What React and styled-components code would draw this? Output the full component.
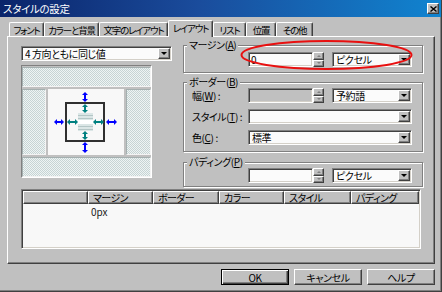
import React from "react";
import styled, { createGlobalStyle, css } from "styled-components";

const Global = createGlobalStyle`
  html, body { margin: 0; padding: 0; background: #c0c0c0; }
  body {
    font-family: "Noto Sans CJK JP", "Noto Sans", sans-serif;
    font-size: 10px;
    color: #000;
    font-feature-settings: "palt";
  }
  * { box-sizing: border-box; }
`;

const raised = css`
  background: #c0c0c0;
  border: 1px solid;
  border-color: #fff #404040 #404040 #fff;
  box-shadow: inset -1px -1px #808080;
`;

const sunken = css`
  border: 1px solid;
  border-color: #808080 #fff #fff #808080;
  box-shadow: inset 1px 1px #404040, inset -1px -1px #d4d0c8;
`;

const hatch = css`
  background-color: #dfe8e8;
  background-image: repeating-conic-gradient(#c6d4d4 0 25%, #eef4f4 0 50%);
  background-size: 2px 2px;
`;

const Window = styled.div`
  position: relative;
  width: 442px;
  height: 292px;
  background: #c0c0c0;
  display: flex;
  flex-direction: column;
  border-right: 1px solid #404040;
  border-bottom: 1px solid #404040;
  box-shadow: inset -1px -1px #808080;
  overflow: hidden;
`;

const TitleBar = styled.div`
  flex: none;
  height: 17px;
  display: flex;
  align-items: center;
  justify-content: space-between;
  padding: 0 2px 0 3px;
  background: linear-gradient(90deg, #0a246a 0%, #1a4c9c 45%, #1084d0 100%);
  color: #fff;
  font-size: 10.5px;
  letter-spacing: -0.3px;
`;

const CloseButton = styled.div`
  width: 12px;
  height: 11px;
  ${raised};
  display: flex;
  align-items: center;
  justify-content: center;
`;

const Body = styled.div`
  flex: 1;
  display: flex;
  flex-direction: column;
  padding: 3px 6px 0 7px;
`;

const TabStrip = styled.div`
  position: relative;
  z-index: 1;
  height: 16px;
  display: flex;
  align-items: flex-end;
  padding-left: 2px;
`;

const Tab = styled.div`
  width: ${(p) => p.$w}px;
  height: ${(p) => (p.$active ? 17 : 14)}px;
  margin-bottom: ${(p) => (p.$active ? -1 : 0)}px;
  display: flex;
  align-items: center;
  justify-content: center;
  background: #c0c0c0;
  border-top: 1px solid #fff;
  border-left: 1px solid #fff;
  border-right: 1px solid #404040;
  box-shadow: inset -1px 0 #808080;
  border-radius: 2px 2px 0 0;
  white-space: nowrap;
  overflow: hidden;
  font-size: 9.5px;
  letter-spacing: -1.2px;
  padding-bottom: ${(p) => (p.$active ? 2 : 0)}px;
`;

const Panel = styled.div`
  width: 428px;
  height: 228px;
  border: 1px solid;
  border-color: #fff #404040 #404040 #fff;
  box-shadow: inset -1px -1px #808080;
  padding: 9px 0 0 13px;
  display: flex;
  flex-direction: column;
`;

const TopSection = styled.div`
  height: 141px;
  display: flex;
  align-items: flex-start;
  gap: 11px;
`;

const LeftCol = styled.div`
  width: 151px;
  display: flex;
  flex-direction: column;
  gap: 4px;
`;

const RightCol = styled.div`
  width: 240px;
  margin-top: -1px;
  display: flex;
  flex-direction: column;
`;

const SelectBox = styled.div`
  width: ${(p) => p.$w}px;
  height: 15px;
  ${sunken};
  background: #fbfbfb;
  display: flex;
  align-items: center;
  padding: 0 1px 0 3px;
  white-space: nowrap;
`;

const SelectText = styled.span`
  flex: 1;
  overflow: hidden;
  letter-spacing: -0.4px;
`;

const DropButton = styled.div`
  width: 12px;
  height: 11px;
  ${raised};
  display: flex;
  align-items: center;
  justify-content: center;
  &::after {
    content: "";
    border-left: 3px solid transparent;
    border-right: 3px solid transparent;
    border-top: 3px solid #000;
  }
`;

const TextBox = styled.div`
  width: 65px;
  height: 15px;
  ${sunken};
  background: ${(p) => (p.$disabled ? "#c0c0c0" : "#fbfbfb")};
  display: flex;
  align-items: center;
  padding-left: 2px;
`;

const Spinner = styled.div`
  width: 11px;
  height: 15px;
  display: flex;
  flex-direction: column;
`;

const SpinButton = styled.div`
  flex: 1;
  ${raised};
  display: flex;
  align-items: center;
  justify-content: center;
  &::after {
    content: "";
    border-left: 2px solid transparent;
    border-right: 2px solid transparent;
    ${(p) =>
      p.$up
        ? "border-bottom: 2px solid #808080;"
        : "border-top: 2px solid #808080;"}
  }
`;

const Group = styled.div`
  position: relative;
  height: ${(p) => p.$h}px;
  margin-top: ${(p) => p.$mt || 0}px;
  border: 1px solid #808080;
  box-shadow: inset 1px 1px #fff, 1px 1px #fff;
  padding-top: ${(p) => p.$pt}px;
  display: flex;
  flex-direction: column;
  gap: 6px;
`;

const Legend = styled.span`
  position: absolute;
  top: -7px;
  left: 3px;
  padding: 0 2px;
  background: #c0c0c0;
  line-height: 12px;
  white-space: nowrap;
  letter-spacing: -0.4px;
`;

const FieldRow = styled.div`
  height: 15px;
  display: flex;
  align-items: center;
  padding-left: 8px;
`;

const FieldLabel = styled.span`
  width: 56px;
  white-space: nowrap;
  letter-spacing: -0.4px;
`;

const Gap = styled.div`
  width: 8px;
`;

const Diagram = styled.div`
  width: 131px;
  height: 113px;
  border: 1px solid;
  border-color: #808080 #fff #fff #808080;
  background: #c0c0c0;
  display: grid;
  grid-template-columns: 24px 76px 25px;
  grid-template-rows: 20px 66px 20px;
  gap: 2px;
  padding-top: 1px;
`;

const HatchArea = styled.div`
  ${hatch};
  grid-column: ${(p) => (p.$wide ? "1 / -1" : "auto")};
  border: 1px solid;
  border-color: #a4b0b0 #f4f4f4 #f4f4f4 #a4b0b0;
`;

const CenterArea = styled.div`
  background: #f8f8f8;
  display: flex;
`;

const Table = styled.div`
  width: 400px;
  height: 60px;
  margin-top: 2px;
  ${sunken};
  padding: 1px;
  background: #f8f8f8;
  display: flex;
  flex-direction: column;
`;

const cols = "65px 65px 66px 65px 67px 1fr";

const HeaderRow = styled.div`
  display: grid;
  grid-template-columns: ${cols};
  height: 13px;
`;

const HeaderCell = styled.div`
  ${raised};
  display: flex;
  align-items: center;
  padding-left: 4px;
  white-space: nowrap;
  line-height: 10px;
  letter-spacing: -0.6px;
`;

const DataRow = styled.div`
  display: grid;
  grid-template-columns: ${cols};
  height: 13px;
  align-items: center;
`;

const DataCell = styled.div`
  padding-left: 3px;
  color: #222;
`;

const ButtonRow = styled.div`
  display: flex;
  justify-content: flex-end;
  gap: 5px;
  margin-top: 5px;
`;

const Button = styled.div`
  width: 68px;
  height: 16px;
  display: flex;
  align-items: center;
  justify-content: center;
  letter-spacing: -0.4px;
  ${raised};
  ${(p) =>
    p.$default &&
    css`
      border: 1px solid #000;
      box-shadow: inset 1px 1px #fff, inset -1px -1px #404040,
        inset -2px -2px #808080;
    `}
`;

const Overlay = styled.svg`
  position: absolute;
  left: 0;
  top: 0;
  pointer-events: none;
`;

const Select = ({ w, children }) => (
  <SelectBox $w={w}>
    <SelectText>{children}</SelectText>
    <DropButton />
  </SelectBox>
);

const NumberField = ({ value, disabled }) => (
  <>
    <TextBox $disabled={disabled}>{value}</TextBox>
    <Spinner>
      <SpinButton $up />
      <SpinButton />
    </Spinner>
  </>
);

const VArrow = ({ x, y1, y2, c }) => (
  <g fill={c}>
    <rect x={x - 1} y={y1 + 3} width={2} height={y2 - y1 - 6} />
    <polygon points={`${x - 3},${y1 + 3} ${x + 3},${y1 + 3} ${x},${y1}`} />
    <polygon points={`${x - 3},${y2 - 3} ${x + 3},${y2 - 3} ${x},${y2}`} />
  </g>
);

const HArrow = ({ y, x1, x2, c }) => (
  <g fill={c}>
    <rect x={x1 + 3} y={y - 1} width={x2 - x1 - 6} height={2} />
    <polygon points={`${x1 + 3},${y - 3} ${x1 + 3},${y + 3} ${x1},${y}`} />
    <polygon points={`${x2 - 3},${y - 3} ${x2 - 3},${y + 3} ${x2},${y}`} />
  </g>
);

const BoxModel = () => (
  <svg width="76" height="66" viewBox="0 0 76 66">
    <rect x="30" y="24" width="15" height="18" fill="#dbe6e6" />
    <rect x="30" y="26" width="15" height="1" fill="#b4c6c6" />
    <rect x="30" y="29" width="15" height="1" fill="#b4c6c6" />
    <rect x="30" y="31" width="15" height="4" fill="#ffffff" />
    <rect x="30" y="37" width="15" height="1" fill="#b4c6c6" />
    <rect x="30" y="40" width="15" height="1" fill="#b4c6c6" />
    <rect x="18" y="14" width="38" height="38" fill="none" stroke="#303030" strokeWidth="2" />
    <VArrow x={37} y1={3} y2={13} c="#0000ff" />
    <VArrow x={37} y1={15} y2={24} c="#008080" />
    <VArrow x={37} y1={42} y2={51} c="#008080" />
    <VArrow x={37} y1={53} y2={64} c="#0000ff" />
    <HArrow y={33} x1={6} x2={16} c="#0000ff" />
    <HArrow y={33} x1={19} x2={30} c="#008080" />
    <HArrow y={33} x1={45} x2={56} c="#008080" />
    <HArrow y={33} x1={58} x2={69} c="#0000ff" />
  </svg>
);

const tabs = [
  ["フォント", 35],
  ["カラーと背景", 55],
  ["文字のレイアウト", 69],
  ["レイアウト", 45, true],
  ["リスト", 33],
  ["位置", 30],
  ["その他", 37],
];

export default function App() {
  return (
    <>
      <Global />
      <Window>
        <TitleBar>
          <span>スタイルの設定</span>
          <CloseButton>
            <svg width="7" height="6" viewBox="0 0 7 6">
              <path d="M0.5 0.5 L6.5 5.5 M6.5 0.5 L0.5 5.5" stroke="#000" strokeWidth="1.4" />
            </svg>
          </CloseButton>
        </TitleBar>
        <Body>
          <TabStrip>
            {tabs.map(([label, w, active]) => (
              <Tab key={label} $w={w} $active={active}>
                {label}
              </Tab>
            ))}
          </TabStrip>
          <Panel>
            <TopSection>
              <LeftCol>
                <Select w={151}>4 方向ともに同じ値</Select>
                <Diagram>
                  <HatchArea $wide />
                  <HatchArea />
                  <CenterArea>
                    <BoxModel />
                  </CenterArea>
                  <HatchArea />
                  <HatchArea $wide />
                </Diagram>
              </LeftCol>
              <RightCol>
                <Group $h={28} $pt={6}>
                  <Legend>
                    マージン(<u>A</u>)
                  </Legend>
                  <FieldRow>
                    <FieldLabel />
                    <NumberField value="0" />
                    <Gap />
                    <Select w={80}>ピクセル</Select>
                  </FieldRow>
                </Group>
                <Group $h={70} $mt={9} $pt={5}>
                  <Legend>
                    ボーダー(<u>B</u>)
                  </Legend>
                  <FieldRow>
                    <FieldLabel>
                      幅(<u>W</u>) :
                    </FieldLabel>
                    <NumberField value="" disabled />
                    <Gap />
                    <Select w={80}>予約語</Select>
                  </FieldRow>
                  <FieldRow>
                    <FieldLabel>
                      スタイル(<u>T</u>) :
                    </FieldLabel>
                    <Select w={164}></Select>
                  </FieldRow>
                  <FieldRow>
                    <FieldLabel>
                      色(<u>C</u>) :
                    </FieldLabel>
                    <Select w={164}>標準</Select>
                  </FieldRow>
                </Group>
                <Group $h={25} $mt={10} $pt={5}>
                  <Legend>
                    パディング(<u>P</u>)
                  </Legend>
                  <FieldRow>
                    <FieldLabel />
                    <NumberField value="" />
                    <Gap />
                    <Select w={80}>ピクセル</Select>
                  </FieldRow>
                </Group>
              </RightCol>
            </TopSection>
            <Table>
              <HeaderRow>
                <HeaderCell />
                <HeaderCell>マージン</HeaderCell>
                <HeaderCell>ボーダー</HeaderCell>
                <HeaderCell>カラー</HeaderCell>
                <HeaderCell>スタイル</HeaderCell>
                <HeaderCell>パディング</HeaderCell>
              </HeaderRow>
              <DataRow>
                <DataCell />
                <DataCell>0px</DataCell>
              </DataRow>
            </Table>
          </Panel>
          <ButtonRow>
            <Button $default>OK</Button>
            <Button>キャンセル</Button>
            <Button>ヘルプ</Button>
          </ButtonRow>
        </Body>
        <Overlay width="442" height="292" viewBox="0 0 442 292">
          <ellipse cx="326.5" cy="55" rx="85" ry="14" fill="none" stroke="#e81010" strokeWidth="2" />
        </Overlay>
      </Window>
    </>
  );
}
